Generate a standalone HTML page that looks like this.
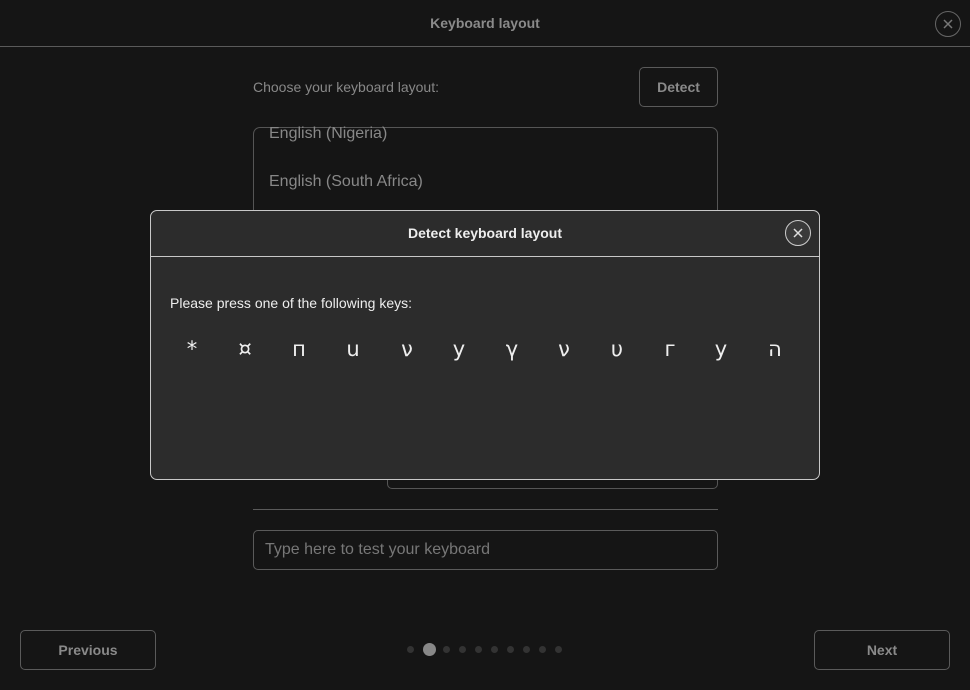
<!DOCTYPE html>
<html><head><meta charset="utf-8"><style>
*{margin:0;padding:0;box-sizing:border-box}
body{width:970px;height:690px;background:#151515;font-family:"Liberation Sans","Noto Sans CJK JP",sans-serif;position:relative;overflow:hidden;color:#888}
.a{position:absolute}
.title{left:0;width:970px;top:15px;text-align:center;font-size:14px;font-weight:bold;color:#8a8a8a}
.hline{left:0;top:46px;width:970px;height:1px;background:#5a5a5a}
.xc{border-radius:50%;border:1px solid #666;}
.xc svg{position:absolute;left:0;top:0}
.btn{border:1px solid #5a5a5a;border-radius:5px;text-align:center;font-size:14px;font-weight:bold;color:#8a8a8a}
.dot{width:7px;height:7px;border-radius:50%;background:#333;top:646px}
.dlg{left:150px;top:210px;width:670px;height:270px;background:#2c2c2c;border:1px solid #c8c8c8;border-radius:7px}
.k{top:337px;font-size:21px;color:#eee;width:30px;text-align:center;font-family:"DejaVu Sans",sans-serif}
</style></head><body>
<div class="a title">Keyboard layout</div>
<div class="a hline"></div>
<div class="a xc" style="left:935px;top:11px;width:26px;height:26px"><svg width="24" height="24"><path d="M8 8L16 16M16 8L8 16" stroke="#777" stroke-width="1.5"/></svg></div>
<div class="a" style="left:253px;top:79px;font-size:14px;color:#888">Choose your keyboard layout:</div>
<div class="a btn" style="left:639px;top:67px;width:79px;height:40px;line-height:38px">Detect</div>
<div class="a" style="left:253px;top:127px;width:465px;height:120px;border:1px solid #555;border-radius:7px"></div>
<div class="a" style="left:269px;top:125px;font-size:16px;color:#888">English (Nigeria)</div>
<div class="a" style="left:269px;top:173px;font-size:16px;color:#888">English (South Africa)</div>
<div class="a" style="left:387px;top:440px;width:331px;height:49px;border:1px solid #555;border-radius:5px"></div>
<div class="a" style="left:253px;top:509px;width:465px;height:1px;background:#5a5a5a"></div>
<div class="a" style="left:253px;top:530px;width:465px;height:40px;border:1px solid #5a5a5a;border-radius:5px;font-size:16px;line-height:38px;padding-left:11px;color:#777">Type here to test your keyboard</div>
<div class="a btn" style="left:20px;top:630px;width:136px;height:40px;line-height:38px">Previous</div>
<div class="a btn" style="left:814px;top:630px;width:136px;height:40px;line-height:38px">Next</div>
<div class="a dot" style="left:407px"></div>
<div class="a dot" style="left:423px;top:643px;width:13px;height:13px;background:#888"></div>
<div class="a dot" style="left:443px"></div><div class="a dot" style="left:459px"></div><div class="a dot" style="left:475px"></div><div class="a dot" style="left:491px"></div><div class="a dot" style="left:507px"></div><div class="a dot" style="left:523px"></div><div class="a dot" style="left:539px"></div><div class="a dot" style="left:555px"></div>
<div class="a dlg"></div>
<div class="a" style="left:151px;top:256px;width:668px;height:1px;background:#c8c8c8"></div>
<div class="a" style="left:150px;top:225px;width:670px;text-align:center;font-size:14px;font-weight:bold;color:#eee">Detect keyboard layout</div>
<div class="a xc" style="left:785px;top:220px;width:26px;height:26px;border-color:#ccc;background:#3a3a3a"><svg width="24" height="24"><path d="M8 8L16 16M16 8L8 16" stroke="#ddd" stroke-width="1.5"/></svg></div>
<div class="a" style="left:170px;top:295px;font-size:14px;color:#eee">Please press one of the following keys:</div>
<div class="a k" style="left:177px">*</div>
<div class="a k" style="left:230px">¤</div>
<div class="a k" style="left:284px">п</div>
<div class="a k" style="left:338px">ս</div>
<div class="a k" style="left:392px">ν</div>
<div class="a k" style="left:444px">у</div>
<div class="a k" style="left:497px">γ</div>
<div class="a k" style="left:549px">ν</div>
<div class="a k" style="left:602px">υ</div>
<div class="a k" style="left:655px">г</div>
<div class="a k" style="left:706px">у</div>
<div class="a k" style="left:760px">ה</div>
</body></html>
